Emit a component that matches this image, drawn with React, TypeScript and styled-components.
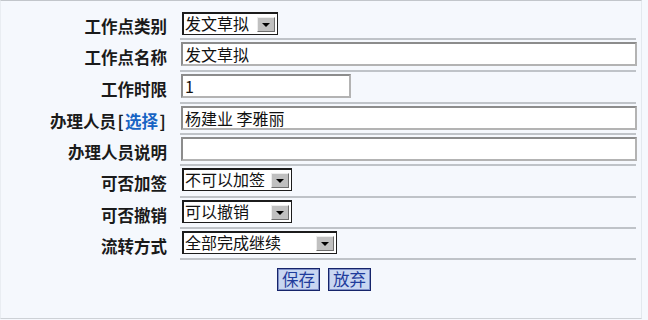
import React from 'react';
import styled, { createGlobalStyle } from 'styled-components';

const GlobalStyle = createGlobalStyle`
    html, body {
        margin: 0;
        padding: 0;
        background: #f5f8fd;
    }
    body {
        font-family: "Noto Sans CJK SC", "Noto Sans", sans-serif;
    }
`;

const Panel = styled.div`
    width: 642px;
    height: 319px;
    box-sizing: border-box;
    background: #f5f8fd;
    border-top: 1px solid #c2c6cb;
    border-bottom: 1px solid #cdd1d6;
    border-right: 1px solid #e3e8ee;
    border-left: 1px solid #e9edf2;
    padding-top: 9px;
`;

const FormGrid = styled.div`
    display: grid;
    grid-template-columns: 179px 456px;
`;

const Label = styled.div`
    display: flex;
    align-items: center;
    justify-content: flex-end;
    padding-right: 13px;
    padding-top: 2px;
    font-size: 16.5px;
    font-weight: bold;
    color: #1a1a1a;
    white-space: nowrap;
`;

const Bracket = styled.span`
    display: inline-block;
    width: 9px;
    text-align: center;
`;

const PickLink = styled.a`
    color: #1764c4;
    text-decoration: none;
    cursor: pointer;
`;

const Field = styled.div<{ $h: number }>`
    height: ${p => p.$h}px;
    box-sizing: border-box;
    padding: 2px 0 0 1px;
    border-bottom: 2px solid #bfc3c8;
`;

const TextInput = styled.input<{ $w: number }>`
    display: block;
    width: ${p => p.$w}px;
    height: 24px;
    box-sizing: border-box;
    margin: 0;
    padding: 0 2px;
    background: #fff;
    border: 2px solid #b3b3b3;
    border-top-color: #8c8c8c;
    border-left-color: #8c8c8c;
    font-family: "Noto Sans CJK SC", "Noto Sans", sans-serif;
    font-size: 16px;
    color: #111;
    outline: none;
`;

const Select = styled.div<{ $w: number }>`
    display: flex;
    align-items: flex-end;
    justify-content: space-between;
    width: ${p => p.$w}px;
    height: 23px;
    box-sizing: border-box;
    margin-left: 1px;
    padding: 0 2px 2px 1px;
    background: #fff;
    border: 1px solid #1c1c1c;
    border-top-width: 2px;
    border-left-width: 2px;
`;

const SelectText = styled.span`
    align-self: center;
    font-size: 16px;
    line-height: 19px;
    color: #111;
    white-space: nowrap;
`;

const Arrow = styled.span`
    display: flex;
    align-items: center;
    justify-content: center;
    width: 18px;
    height: 15px;
    box-sizing: border-box;
    background: #c0c0c0;
    border: 1px solid;
    border-color: #ededed #6e6e6e #6e6e6e #ededed;

    &::after {
        content: "";
        border-left: 4px solid transparent;
        border-right: 4px solid transparent;
        border-top: 4px solid #000;
    }
`;

const ButtonBar = styled.div`
    display: flex;
    justify-content: center;
    gap: 8px;
    margin-top: 8px;
    padding-left: 6px;
`;

const Button = styled.button`
    width: 43px;
    height: 23px;
    box-sizing: border-box;
    padding: 0;
    background: #c8d6f1;
    border: 1px solid #16246a;
    box-shadow: inset 0 0 0 1px #7e8fc8;
    color: #1f3c9c;
    font-family: "Noto Sans CJK SC", "Noto Sans", sans-serif;
    font-size: 16.5px;
    line-height: 19px;
    cursor: pointer;
`;

const DropDown: React.FC<{ width: number; value: string }> = ({ width, value }) => (
    <Select $w={width}>
        <SelectText>{value}</SelectText>
        <Arrow />
    </Select>
);

const App: React.FC = () => {
    return (
        <>
            <GlobalStyle />
            <Panel>
                <FormGrid>
                    <Label>工作点类别</Label>
                    <Field $h={30}>
                        <DropDown width={96} value="发文草拟" />
                    </Field>

                    <Label>工作点名称</Label>
                    <Field $h={32}>
                        <TextInput $w={456} defaultValue="发文草拟" />
                    </Field>

                    <Label>工作时限</Label>
                    <Field $h={32}>
                        <TextInput $w={170} defaultValue="1" />
                    </Field>

                    <Label>
                        办理人员<Bracket>[</Bracket>
                        <PickLink>选择</PickLink>
                        <Bracket>]</Bracket>
                    </Label>
                    <Field $h={31}>
                        <TextInput $w={456} defaultValue="杨建业 李雅丽" />
                    </Field>

                    <Label>办理人员说明</Label>
                    <Field $h={31}>
                        <TextInput $w={456} defaultValue="" />
                    </Field>

                    <Label>可否加签</Label>
                    <Field $h={32}>
                        <DropDown width={110} value="不可以加签" />
                    </Field>

                    <Label>可否撤销</Label>
                    <Field $h={31}>
                        <DropDown width={110} value="可以撤销" />
                    </Field>

                    <Label>流转方式</Label>
                    <Field $h={31}>
                        <DropDown width={155} value="全部完成继续" />
                    </Field>
                </FormGrid>
                <ButtonBar>
                    <Button type="button">保存</Button>
                    <Button type="button">放弃</Button>
                </ButtonBar>
            </Panel>
        </>
    );
};

export default App;
